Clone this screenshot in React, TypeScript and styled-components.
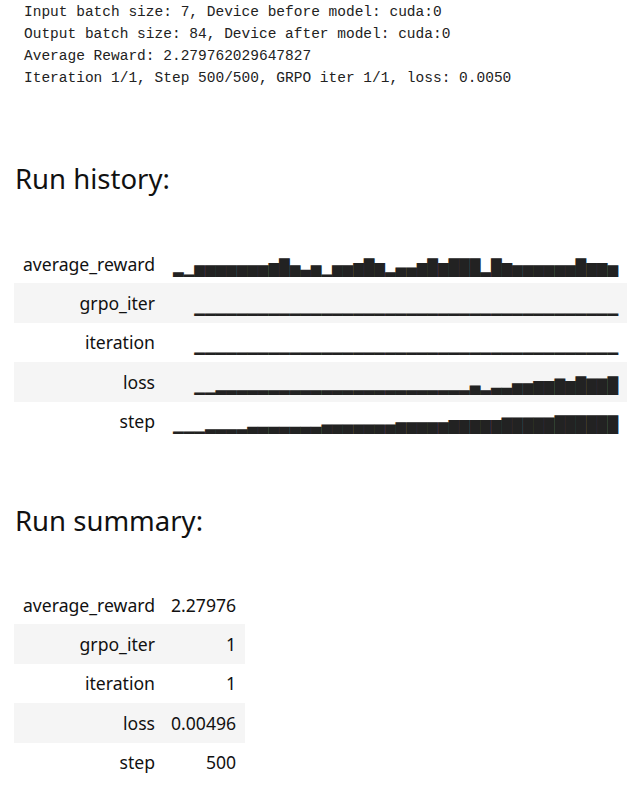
import * as React from 'react';
import styled, { createGlobalStyle } from 'styled-components';

const GlobalStyle = createGlobalStyle`
  html, body {
    margin: 0;
    padding: 0;
    background: #fff;
  }
  body {
    font-family: "Noto Sans", "Open Sans", sans-serif;
    color: #111;
  }
`;

const Page = styled.div`
  width: 632px;
  min-height: 798px;
  box-sizing: border-box;
  padding-top: 1px;
`;

const Output = styled.pre`
  margin: 0;
  padding-left: 24px;
  font-family: "Liberation Mono", monospace;
  font-size: 14.5px;
  line-height: 22px;
  color: #222;
`;

const Section = styled.section<{ $top: number }>`
  padding: ${p => p.$top}px 5px 0 14px;
`;

const Heading = styled.h3<{ $gap: number }>`
  margin: 0 0 ${p => p.$gap}px 1px;
  font-size: 27.5px;
  line-height: 40px;
  font-weight: 400;
  color: #111;
`;

const Table = styled.table<{ $full?: boolean }>`
  border-collapse: collapse;
  width: ${p => (p.$full ? '613px' : 'auto')};
`;

const Row = styled.tr`
  height: 39.4px;
  &:nth-child(even) {
    background: #f5f5f5;
  }
`;

const Label = styled.td`
  padding: 0 8px 0 9px;
  text-align: right;
  white-space: nowrap;
  font-size: 17.6px;
`;

const Value = styled.td<{ $fill?: boolean }>`
  padding: 0 9px 0 8px;
  text-align: right;
  white-space: nowrap;
  font-size: 17.6px;
  width: ${p => (p.$fill ? '100%' : 'auto')};
`;

const Spark = styled.span`
  display: inline-block;
  font-family: "DejaVu Sans Mono", monospace;
  font-size: 17.6px;
  line-height: 1;
  color: #222;
  transform: translateY(2px) scaleY(0.9);
  transform-origin: 50% 100%;
`;

const BLOCKS = ' ▁▂▃▄▅▆▇█';
const spark = (levels: string) =>
  levels
    .split('')
    .map(d => BLOCKS[Number(d)])
    .join('');

const history = [
  { name: 'average_reward', levels: '215555555685351556862446868882865555558665' },
  { name: 'grpo_iter', levels: '1'.repeat(40) },
  { name: 'iteration', levels: '1'.repeat(40) },
  { name: 'loss', levels: '11' + '2'.repeat(24) + '4233556676877' + '8' },
  { name: 'step', levels: '111' + '2222' + '3333333' + '4444444' + '55555' + '66666' + '77777' + '888888' },
];

const summary = [
  { name: 'average_reward', value: '2.27976' },
  { name: 'grpo_iter', value: '1' },
  { name: 'iteration', value: '1' },
  { name: 'loss', value: '0.00496' },
  { name: 'step', value: '500' },
];

export default function App() {
  return (
    <>
      <GlobalStyle />
      <Page>
        <Output>
          {'Input batch size: 7, Device before model: cuda:0\n' +
            'Output batch size: 84, Device after model: cuda:0\n' +
            'Average Reward: 2.279762029647827\n' +
            'Iteration 1/1, Step 500/500, GRPO iter 1/1, loss: 0.0050'}
        </Output>
        <Section $top={70}>
          <Heading $gap={45}>Run history:</Heading>
          <Table $full>
            <tbody>
              {history.map(h => (
                <Row key={h.name}>
                  <Label>{h.name}</Label>
                  <Value $fill>
                    <Spark>{spark(h.levels)}</Spark>
                  </Value>
                </Row>
              ))}
            </tbody>
          </Table>
        </Section>
        <Section $top={60}>
          <Heading $gap={44}>Run summary:</Heading>
          <Table>
            <tbody>
              {summary.map(s => (
                <Row key={s.name}>
                  <Label>{s.name}</Label>
                  <Value>{s.value}</Value>
                </Row>
              ))}
            </tbody>
          </Table>
        </Section>
      </Page>
    </>
  );
}
